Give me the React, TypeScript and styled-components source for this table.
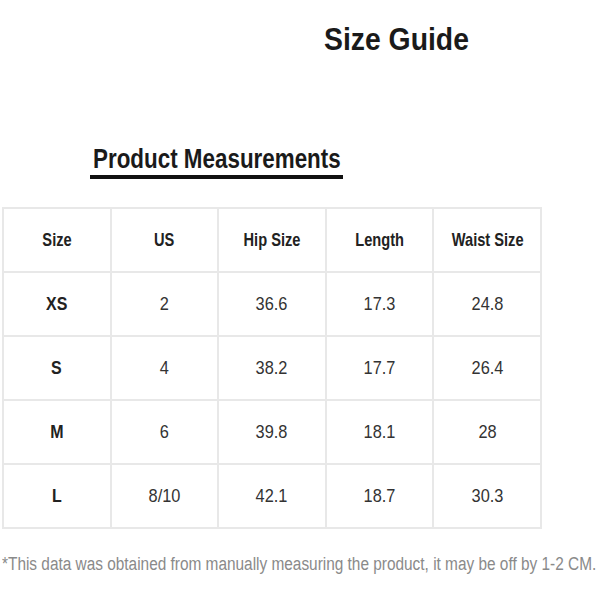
import React from "react";
import styled, { createGlobalStyle } from "styled-components";

const Global = createGlobalStyle`
  html, body { margin: 0; padding: 0; background: #fff; }
  body { font-family: "Liberation Sans", Arial, sans-serif; color: #1a1a1a; }
`;

const Page = styled.div`
  width: 600px;
  height: 600px;
  box-sizing: border-box;
  display: flex;
  flex-direction: column;
  align-items: flex-start;
  overflow: hidden;
`;

/* Condensed type: the reference uses an Arial Narrow–like face */
const Narrow = styled.span<{ $x: number; $origin?: string }>`
  display: inline-block;
  white-space: nowrap;
  transform: scaleX(${(p) => p.$x});
  transform-origin: ${(p) => p.$origin ?? "center"};
`;

const Title = styled.h1`
  margin: 21px 0 0 324px;
  font-size: 32px;
  font-weight: 700;
  line-height: 36px;
  color: #1a1a1a;
`;

const SectionTitle = styled.h2`
  box-sizing: border-box;
  width: 253px;
  margin: 86px 0 0 90px;
  padding: 0 0 0 3px;
  font-size: 28px;
  font-weight: 700;
  line-height: 32px;
  color: #1a1a1a;
  border-bottom: 4px solid #111;
`;

const Table = styled.table`
  margin: 28px 0 0 2px;
  width: 540px;
  border-collapse: collapse;
  table-layout: fixed;
`;

const Cell = styled.td<{ $bold?: boolean }>`
  height: 62px;
  padding: 0;
  border: 2px solid #e8e8e8;
  text-align: center;
  font-size: 19px;
  font-weight: ${(p) => (p.$bold ? 700 : 400)};
  color: ${(p) => (p.$bold ? "#222" : "#333")};
`;

const Note = styled.p`
  margin: 25px 0 0 2px;
  font-size: 18px;
  line-height: 20px;
  color: #8a8a8a;
`;

const headers = ["Size", "US", "Hip Size", "Length", "Waist Size"];
const rows = [
  ["XS", "2", "36.6", "17.3", "24.8"],
  ["S", "4", "38.2", "17.7", "26.4"],
  ["M", "6", "39.8", "18.1", "28"],
  ["L", "8/10", "42.1", "18.7", "30.3"],
];

export default function App() {
  return (
    <Page>
      <Global />
      <Title>
        <Narrow $x={0.886} $origin="left">Size Guide</Narrow>
      </Title>
      <SectionTitle>
        <Narrow $x={0.8} $origin="left">Product Measurements</Narrow>
      </SectionTitle>
      <Table>
        <tbody>
          <tr>
            {headers.map((h) => (
              <Cell as="th" key={h} $bold>
                <Narrow $x={0.77}>{h}</Narrow>
              </Cell>
            ))}
          </tr>
          {rows.map((r) => (
            <tr key={r[0]}>
              {r.map((v, i) => (
                <Cell key={i} $bold={i === 0}>
                  <Narrow $x={i === 0 ? 0.84 : 0.86}>{v}</Narrow>
                </Cell>
              ))}
            </tr>
          ))}
        </tbody>
      </Table>
      <Note>
        <Narrow $x={0.855} $origin="left">
          *This data was obtained from manually measuring the product, it may be off by 1-2 CM.
        </Narrow>
      </Note>
    </Page>
  );
}
